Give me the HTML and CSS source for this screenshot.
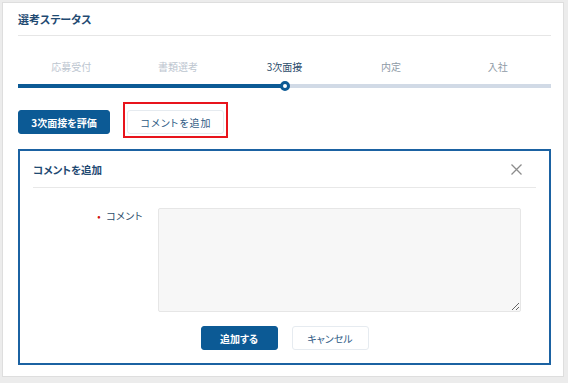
FILE: index.html
```html
<!DOCTYPE html>
<html lang="ja">
<head>
	<meta charset="UTF-8">
	<title>選考ステータス</title>
	<link rel="stylesheet" href="styles.css">
</head>
<body>
	<div id="card">
		<h2 class="title">選考ステータス</h2>
		<div class="steps">
			<ol class="step-labels">
				<li class="done">応募受付</li>
				<li class="done">書類選考</li>
				<li class="current">3次面接</li>
				<li>内定</li>
				<li>入社</li>
			</ol>
			<div class="track">
				<div class="track-done"></div>
				<div class="track-dot"></div>
				<div class="track-rest"></div>
			</div>
		</div>
		<div class="actions">
			<button class="btn primary">3次面接を評価</button>
			<div class="highlight">
				<button class="btn secondary spaced">コメントを追加</button>
			</div>
		</div>
		<div class="dialog">
			<div class="dialog-head">
				<h3>コメントを追加</h3>
				<span class="close">
					<svg width="11" height="11" viewBox="0 0 11 11"><path d="M0.5 0.5L10.5 10.5M10.5 0.5L0.5 10.5" stroke="#8c8c8c" stroke-width="1.3" fill="none"/></svg>
				</span>
			</div>
			<div class="field">
				<label class="label"><span class="req">•</span>コメント</label>
				<textarea class="comment"></textarea>
			</div>
			<div class="dialog-foot">
				<button class="btn primary wide">追加する</button>
				<button class="btn secondary wide">キャンセル</button>
			</div>
		</div>
	</div>
</body>
</html>
```

FILE: styles.css
```css
* {
	margin: 0;
	padding: 0;
	box-sizing: border-box;
}
body {
	font-family: "Noto Sans CJK JP", "Noto Sans", sans-serif;
	font-feature-settings: "palt";
	font-size: 10px;
	background: #ececec;
	color: #2d4d6c;
	padding: 2px 4px 4px 2px;
	height: 383px;
	overflow: hidden;
}
ol {
	list-style: none;
}
#card {
	background: #fff;
	border: 1px solid #dedede;
	height: 375px;
	padding: 0 12px 0 15px;
}
.title {
	font-size: 11px;
	font-weight: bold;
	color: #1f4a72;
	line-height: 16px;
	padding: 8px 0 8px;
	border-bottom: 1px solid #e6e6e6;
}
.steps {
	padding-top: 24px;
}
.step-labels {
	display: flex;
	color: #8e9aa6;
	font-size: 10px;
	line-height: 14px;
}
.step-labels li {
	flex: 1;
	text-align: center;
}
.step-labels li.done {
	color: #bcc5cf;
}
.step-labels li.current {
	color: #2d4d6c;
}
.track {
	display: flex;
	align-items: center;
	margin-top: 7px;
	height: 10px;
}
.track-done {
	flex: 1;
	height: 4px;
	background: #0c5a95;
}
.track-rest {
	flex: 1;
	height: 4px;
	background: #d1dae6;
}
.track-dot {
	width: 10px;
	height: 10px;
	border-radius: 50%;
	border: 3px solid #0c5a95;
	background: #fff;
	margin: 0 -5px;
	position: relative;
	z-index: 1;
}
.actions {
	display: flex;
	align-items: flex-end;
	margin-top: 11px;
}
.btn {
	font-family: inherit;
	font-feature-settings: "palt";
	font-size: 10px;
	height: 24px;
	border-radius: 3px;
	cursor: pointer;
	padding: 0;
}
.btn.primary {
	background: #0c5a95;
	color: #fff;
	border: 1px solid #0c5a95;
	font-weight: bold;
	width: 92px;
	margin-bottom: 4px;
}
.btn.secondary {
	background: #fff;
	color: #2f5b85;
	border: 1px solid #e6ebf0;
	width: 97px;
}
.btn.spaced {
	letter-spacing: 1px;
	text-indent: 1px;
}
.highlight {
	border: 2px solid #e8141c;
	padding: 6px 2px 2px;
	margin-left: 13px;
	display: flex;
}
.dialog {
	margin-top: 11px;
	border: 2px solid #1b62a2;
	height: 216px;
	padding: 0 13px;
}
.dialog-head {
	display: flex;
	justify-content: space-between;
	align-items: center;
	height: 37px;
	border-bottom: 1px solid #e8e8e8;
}
.dialog-head h3 {
	font-size: 10.5px;
	font-weight: bold;
	color: #1f4a72;
}
.close {
	display: flex;
	margin-right: 14px;
}
.field {
	display: flex;
	margin-top: 20px;
}
.label {
	width: 110px;
	text-align: right;
	font-size: 10px;
	line-height: 14px;
	padding-top: 1px;
	letter-spacing: 0.5px;
	color: #2d4d6c;
}
.req {
	color: #d01010;
	margin-right: 5px;
}
.comment {
	margin-left: 15px;
	width: 363px;
	height: 104px;
	background: #f7f7f7;
	border: 1px solid #e6e6e6;
	border-radius: 2px;
}
.dialog-foot {
	display: flex;
	justify-content: center;
	gap: 14px;
	margin-top: 14px;
}
.btn.wide {
	width: 77px;
	margin-bottom: 0;
}
```
